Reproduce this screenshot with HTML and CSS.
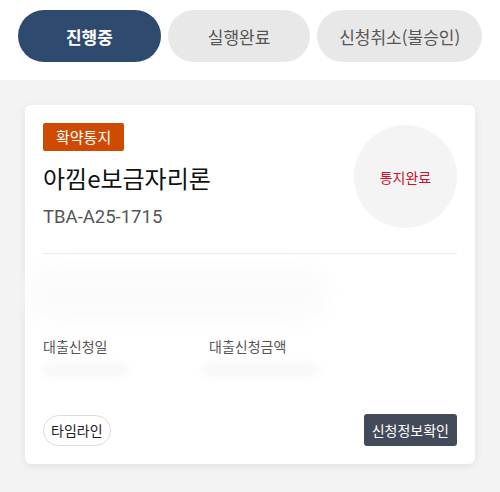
FILE: index.html
```html
<!DOCTYPE html>
<html lang="ko">
<head>
<meta charset="utf-8">
<link rel="stylesheet" href="styles.css">
</head>
<body>
<div class="top">
  <div class="tabs">
    <div class="tab active">진행중</div>
    <div class="tab">실행완료</div>
    <div class="tab wide">신청취소(불승인)</div>
  </div>
</div>
<div class="content">
  <div class="card">
    <div class="head">
      <div class="info">
        <span class="badge">확약통지</span>
        <div class="title">아낌e보금자리론</div>
        <div class="code">TBA-A25-1715</div>
      </div>
      <div class="status">통지완료</div>
    </div>
    <div class="divider"></div>
    <div class="blur-band"></div>
    <div class="fields">
      <div class="field">
        <div class="label">대출신청일</div>
        <div class="value v1"></div>
      </div>
      <div class="field">
        <div class="label">대출신청금액</div>
        <div class="value v2"></div>
      </div>
    </div>
    <div class="actions">
      <div class="btn-outline">타임라인</div>
      <div class="btn-dark">신청정보확인</div>
    </div>
  </div>
</div>
</body>
</html>
```

FILE: styles.css
```css
* { box-sizing: border-box; }
html, body { margin: 0; padding: 0; }
body {
  width: 500px;
  height: 492px;
  overflow: hidden;
  background: #f3f3f3;
  font-family: "Noto Sans CJK KR", "Noto Sans", sans-serif;
  color: #111;
}
.top {
  background: #fff;
  height: 80px;
  padding: 10px 18px 0 18px;
}
.tabs {
  display: flex;
  gap: 7px;
}
.tab {
  height: 52px;
  width: 143px;
  border-radius: 26px;
  background: #e8e8e8;
  color: #555;
  font-size: 17px;
  display: flex;
  align-items: center;
  justify-content: center;
}
.tab.wide { width: 165px; }
.tab.active {
  background: #2f4a6f;
  color: #fff;
  font-weight: 700;
}
.content {
  padding: 25px 25px 0 25px;
}
.card {
  background: #fff;
  border-radius: 6px;
  box-shadow: 0 2px 8px rgba(0,0,0,0.08);
  padding: 18px;
  height: 359px;
  display: flex;
  flex-direction: column;
}
.head {
  display: flex;
  justify-content: space-between;
  align-items: flex-start;
}
.info { display: flex; flex-direction: column; align-items: flex-start; }
.badge {
  background: #cf4a03;
  color: #fff;
  font-size: 15px;
  height: 28px;
  line-height: 28px;
  padding: 0 13px;
  border-radius: 2px;
}
.title {
  margin-top: 9px;
  font-size: 24px;
  font-weight: 400;
  line-height: 36px;
  color: #111;
}
.code {
  margin-top: 8px;
  font-family: "Roboto", "Noto Sans", sans-serif;
  font-size: 18.5px;
  color: #555;
  line-height: 26px;
}
.status {
  width: 103px;
  height: 103px;
  border-radius: 50%;
  background: #f4f4f5;
  color: #d0102b;
  font-size: 14px;
  display: flex;
  align-items: center;
  justify-content: center;
  margin-top: 2px;
}
.divider {
  margin-top: 23px;
  height: 1px;
  background: #ececec;
}
.blur-band {
  margin: 12px -18px 0 -18px;
  height: 56px;
  width: 305px;
  border-radius: 28px;
  background: #fbfbfb;
  filter: blur(8px);
}
.fields {
  margin-top: 14px;
  display: flex;
}
.field { width: 166px; }
.label {
  font-size: 14px;
  color: #555;
  line-height: 20px;
}
.value {
  margin-top: 6px;
  height: 16px;
  border-radius: 8px;
  background: #f9f9f9;
  filter: blur(3px);
}
.v1 { width: 85px; }
.v2 { width: 118px; margin-left: -8px; }
.actions {
  margin-top: auto;
  display: flex;
  justify-content: space-between;
  align-items: center;
}
.btn-outline {
  height: 31px;
  padding: 0 7px;
  border: 1px solid #ddd;
  border-radius: 16px;
  font-size: 14px;
  color: #222;
  display: flex;
  align-items: center;
}
.btn-dark {
  height: 32px;
  padding: 0 8px;
  background: #434a5a;
  color: #fff;
  border-radius: 3px;
  font-size: 14px;
  display: flex;
  align-items: center;
}
```
